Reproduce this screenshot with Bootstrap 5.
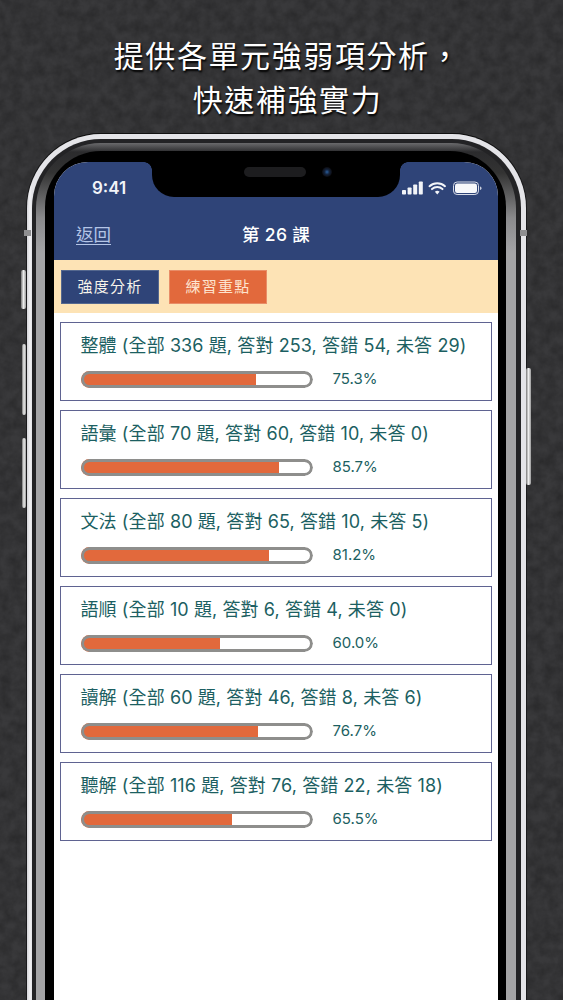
<!DOCTYPE html>
<html lang="zh-Hant">
<head>
<meta charset="utf-8">
<title>強度分析</title>
<link rel="stylesheet" href="https://cdn.jsdelivr.net/npm/bootstrap@5.3.0/dist/css/bootstrap.min.css">
<style>
html,body{height:1000px;overflow:hidden}
body{background-color:#39393b;background-image:url("data:image/svg+xml,%3Csvg xmlns='http://www.w3.org/2000/svg' width='563' height='1000'%3E%3Cfilter id='n'%3E%3CfeTurbulence type='fractalNoise' baseFrequency='.09' numOctaves='4' seed='7'/%3E%3CfeColorMatrix values='0 0 0 0 0 0 0 0 0 0 0 0 0 0 0 0 0 0 .4 -.1'/%3E%3C/filter%3E%3Crect width='563' height='1000' filter='url(%23n)'/%3E%3C/svg%3E");font-family:"Inter","Noto Sans CJK TC",sans-serif;position:relative}
.headline{height:134px;padding-top:34px;color:#fff;font-size:30px;line-height:44px;letter-spacing:1.6px;text-align:center;text-shadow:1px 2px 2px #000;font-weight:400;padding-left:12px}
.headline div{white-space:nowrap}
.phone-wrap{margin-left:27px;width:499px;position:relative}
.ring-a{background:linear-gradient(90deg,#d4d4d8,#f2f2f4 3px,#e4e4e8 5px);padding:5px 5px 0 5px;border-radius:74px 74px 0 0;box-shadow:0 -1px 0 #111,0 0 0 1px #1b1b1d}
.ring-b{background:#232325;padding:4px 5px 0 4px;border-radius:69px 69px 0 0}
.ring-c{background:linear-gradient(180deg,#6a6a6c 0,#2b2b2d 9px,#333 30px,#8a8a8c 75px,#a4a4a6 110px);padding:8px 10px 0 9px;border-radius:65px 65px 0 0}
.ring-d{background:#000;padding:11px 8px 0 9px;border-radius:56px 56px 0 0}
.screen{background:#fff;width:444px;height:860px;border-radius:34px 34px 0 0;overflow:hidden;position:relative}
.bluebar{background:#2f4478;height:98px;color:#fff}
.status{height:47px;padding:15px 16px 0 38px}
.clock{font-size:17px;font-weight:600;line-height:22px;color:#f2f4f8}
.navrow{height:51px;padding:2px 22px 0;position:relative}
.backlink{color:#b4c5e6;font-size:17.5px;text-decoration:underline;text-underline-offset:3px}
.navtitle{left:0;right:0;text-align:center;font-size:17.5px;font-weight:500;position:absolute;letter-spacing:.3px}
.notch{position:absolute;top:0;left:98px;width:248px;height:35px;background:#000;border-radius:0 0 22px 22px}
.notch::before,.notch::after{content:"";position:absolute;top:0;width:8px;height:8px;background:radial-gradient(circle at 0 100%,transparent 7.5px,#000 8px)}
.notch::before{left:-8px}
.notch::after{right:-8px;transform:scaleX(-1)}
.speaker{position:absolute;left:92px;top:5px;width:62px;height:10px;border-radius:5px;background:#1d1d1f}
.camera{position:absolute;left:170px;top:5px;width:10px;height:10px;border-radius:50%;background:radial-gradient(circle,#2a5f9e 0,#14233c 35%,#0b0b10 70%)}
.toolbar{background:#fde3b5;height:53px;padding:10px 7px 0 7px;gap:10px}
.tabbtn{height:34px;width:98px;border-radius:0;font-size:15px;line-height:32px;padding:0;letter-spacing:1.3px;color:#f6f3ea;border:1px solid #c9c3b0;--bs-btn-hover-color:#f6f3ea}
.tab-blue{background:#2f4478;--bs-btn-hover-bg:#2f4478;--bs-btn-hover-border-color:#c9c3b0;border-color:#55688f}
.tab-orange{background:#e2693c;--bs-btn-hover-bg:#e2693c;--bs-btn-hover-border-color:#c9c3b0;border-color:#e88d68;color:#fde4cf}
.statlist{padding:9px 6px 0;gap:9px}
.statbox{height:79px;border:1.5px solid #5f6391;border-radius:0;padding:10px 19.500px 0;color:#1c5f62}
.stat-line{font-size:18px;line-height:26px;white-space:nowrap;letter-spacing:.1px}
.meter-row{margin-top:11px;gap:20px}
.meter{width:232px;height:17px;border-radius:9px;background:#fff;position:relative;--bs-progress-bar-bg:#e2693c}
.meter::after{content:"";position:absolute;inset:0;border:3px solid #8e8e8c;border-radius:9px}
.pct{font-size:15px;line-height:18px}
.side{position:absolute;background:linear-gradient(90deg,#777,#ececec 50%,#9a9a9a);border-radius:2px}
.band{position:absolute;background:#8e8e90;width:7px;height:6px}
</style>
</head>
<body>
<div class="headline">
  <div>提供各單元強弱項分析，</div>
  <div>快速補強實力</div>
</div>
<div class="phone-wrap">
  <span class="side" style="left:-6px;top:136px;width:5px;height:39px"></span>
  <span class="side" style="left:-5px;top:210px;width:4px;height:71px"></span>
  <span class="side" style="left:-5px;top:304px;width:4px;height:70px"></span>
  <span class="side" style="left:499px;top:234px;width:5px;height:117px"></span>
  <span class="band" style="left:-3px;top:96px"></span>
  <span class="band" style="left:493px;top:96px"></span>
  <div class="ring-a"><div class="ring-b"><div class="ring-c"><div class="ring-d">
    <div class="screen">
      <div class="bluebar">
        <div class="status d-flex justify-content-between align-items-start">
          <span class="clock">9:41</span>
          <svg width="80" height="16" viewBox="0 0 80 16" class="mt-1" aria-hidden="true">
            <rect x="0" y="9" width="4" height="4.500" rx=".8" fill="#f2f4f8"/>
            <rect x="5.600" y="6.500" width="4" height="7" rx=".8" fill="#f2f4f8"/>
            <rect x="11.200" y="3.500" width="4" height="10" rx=".8" fill="#f2f4f8"/>
            <rect x="16.800" y=".5" width="4" height="13" rx=".8" fill="#f2f4f8"/>
            <path d="M27.500 5.200a11.500 11.500 0 0 1 15.500 0M30 8.100a7.800 7.800 0 0 1 10.500 0" fill="none" stroke="#f2f4f8" stroke-width="2" stroke-linecap="round"/>
            <path d="M32.900 10.800a3.600 3.600 0 0 1 4.700 0L35.250 13.500z" fill="#f2f4f8"/>
            <rect x="51.500" y="1" width="25" height="12.500" rx="3.600" fill="none" stroke="#d8dce8" stroke-width="1"/>
            <rect x="53" y="2.500" width="22" height="9.500" rx="2.200" fill="#f7f8fb"/>
            <path d="M78 5.500c1.100.3 1.600 1 1.600 1.800s-.5 1.500-1.600 1.800z" fill="#c9cedd"/>
          </svg>
        </div>
        <div class="navrow d-flex align-items-center">
          <a class="backlink" href="#">返回</a>
          <span class="navtitle">第 26 課</span>
        </div>
      </div>
      <div class="notch"><span class="speaker"></span><span class="camera"></span></div>
      <div class="toolbar d-flex">
        <button type="button" class="btn tabbtn tab-blue">強度分析</button>
        <button type="button" class="btn tabbtn tab-orange">練習重點</button>
      </div>
      <div class="statlist d-flex flex-column">
        <div class="statbox">
          <div class="stat-line">整體 (全部 336 題, 答對 253, 答錯 54, 未答 29)</div>
          <div class="meter-row d-flex align-items-center"><div class="progress meter"><div class="progress-bar" style="width:75.8%"></div></div><span class="pct">75.3%</span></div>
        </div>
        <div class="statbox">
          <div class="stat-line">語彙 (全部 70 題, 答對 60, 答錯 10, 未答 0)</div>
          <div class="meter-row d-flex align-items-center"><div class="progress meter"><div class="progress-bar" style="width:85.7%"></div></div><span class="pct">85.7%</span></div>
        </div>
        <div class="statbox">
          <div class="stat-line">文法 (全部 80 題, 答對 65, 答錯 10, 未答 5)</div>
          <div class="meter-row d-flex align-items-center"><div class="progress meter"><div class="progress-bar" style="width:81.2%"></div></div><span class="pct">81.2%</span></div>
        </div>
        <div class="statbox">
          <div class="stat-line">語順 (全部 10 題, 答對 6, 答錯 4, 未答 0)</div>
          <div class="meter-row d-flex align-items-center"><div class="progress meter"><div class="progress-bar" style="width:60%"></div></div><span class="pct">60.0%</span></div>
        </div>
        <div class="statbox">
          <div class="stat-line">讀解 (全部 60 題, 答對 46, 答錯 8, 未答 6)</div>
          <div class="meter-row d-flex align-items-center"><div class="progress meter"><div class="progress-bar" style="width:76.7%"></div></div><span class="pct">76.7%</span></div>
        </div>
        <div class="statbox">
          <div class="stat-line">聽解 (全部 116 題, 答對 76, 答錯 22, 未答 18)</div>
          <div class="meter-row d-flex align-items-center"><div class="progress meter"><div class="progress-bar" style="width:65.5%"></div></div><span class="pct">65.5%</span></div>
        </div>
      </div>
    </div>
  </div></div></div></div>
</div>
</body>
</html>
